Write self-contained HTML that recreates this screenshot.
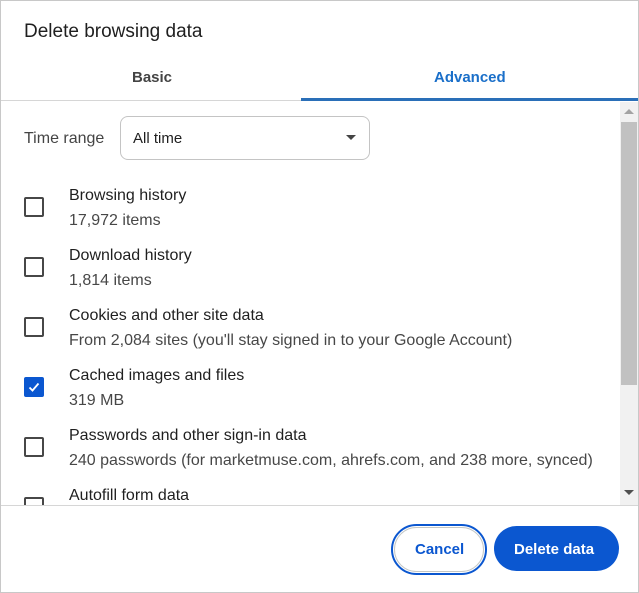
<!DOCTYPE html>
<html><head><style>
*{margin:0;padding:0;box-sizing:border-box}
body{width:639px;height:593px;background:#fff;font-family:"Liberation Sans",sans-serif;color:#1f1f1f;position:relative;overflow:hidden}
.frame{position:absolute;left:0;top:0;width:639px;height:593px;border:1px solid #c8c8c8}
.abs{position:absolute;white-space:nowrap}
.cb{position:absolute;left:24px;width:20px;height:20px;border:2px solid #474747;border-radius:2px}
.t{font-size:16px;color:#1f1f1f}
.s{font-size:16px;color:#474747}
</style></head><body>
<div class="frame"></div>
<div class="abs" style="left:24px;top:21px;font-size:19px;color:#1f1f1f">Delete browsing data</div>
<div class="abs" style="left:132px;top:69px;font-size:15px;font-weight:bold;color:#444">Basic</div>
<div class="abs" style="left:434px;top:69px;font-size:15px;font-weight:bold;color:#1a6fc9">Advanced</div>
<div class="abs" style="left:1px;top:100px;width:637px;height:1px;background:#d6d6d6"></div>
<div class="abs" style="left:301px;top:98px;width:337px;height:3px;background:#2a6fb8"></div>
<div class="abs" style="left:620px;top:102px;width:18px;height:403px;background:#f1f1f1"></div>
<div class="abs" style="left:621px;top:122px;width:16px;height:263px;background:#c1c1c1"></div>
<div class="abs" style="left:624px;top:109px;width:0;height:0;border-left:5px solid transparent;border-right:5px solid transparent;border-bottom:5px solid #a3a3a3"></div>
<div class="abs" style="left:624px;top:490px;width:0;height:0;border-left:5px solid transparent;border-right:5px solid transparent;border-top:5px solid #505050"></div>
<div class="abs" style="left:24px;top:130px;font-size:16px;color:#444">Time range</div>
<div class="abs" style="left:120px;top:116px;width:250px;height:44px;border:1px solid #c4c4c4;border-radius:8px"></div>
<div class="abs" style="left:133px;top:130px;font-size:15px;color:#1f1f1f">All time</div>
<div class="abs" style="left:346px;top:135px;width:0;height:0;border-left:5px solid transparent;border-right:5px solid transparent;border-top:5px solid #444"></div>
<div style="position:absolute;left:0;top:102px;width:620px;height:403px;overflow:hidden">
 <div class="cb" style="top:95px"></div>
 <div class="abs t" style="left:69px;top:85px">Browsing history</div>
 <div class="abs s" style="left:69px;top:110px">17,972 items</div>
 <div class="cb" style="top:155px"></div>
 <div class="abs t" style="left:69px;top:145px">Download history</div>
 <div class="abs s" style="left:69px;top:170px">1,814 items</div>
 <div class="cb" style="top:215px"></div>
 <div class="abs t" style="left:69px;top:205px">Cookies and other site data</div>
 <div class="abs s" style="left:69px;top:230px">From 2,084 sites (you'll stay signed in to your Google Account)</div>
 <div class="cb" style="top:275px;background:#0b57d0;border-color:#0b57d0"><svg width="16" height="16" viewBox="0 0 16 16" style="position:absolute;left:0;top:0"><path d="M3.5 8.5l3 3 6-7" fill="none" stroke="#fff" stroke-width="1.8"/></svg></div>
 <div class="abs t" style="left:69px;top:265px">Cached images and files</div>
 <div class="abs s" style="left:69px;top:290px">319 MB</div>
 <div class="cb" style="top:335px"></div>
 <div class="abs t" style="left:69px;top:325px">Passwords and other sign-in data</div>
 <div class="abs s" style="left:69px;top:350px">240 passwords (for marketmuse.com, ahrefs.com, and 238 more, synced)</div>
 <div class="cb" style="top:395px"></div>
 <div class="abs t" style="left:69px;top:385px">Autofill form data</div>
</div>
<div class="abs" style="left:1px;top:505px;width:637px;height:1px;background:#d6d6d6"></div>
<div class="abs" style="left:391px;top:524px;width:96px;height:51px;border:2px solid #0b57d0;border-radius:26px"></div>
<div class="abs" style="left:394px;top:527px;width:90px;height:45px;border:1px solid #c4c7c5;border-radius:23px"></div>
<div class="abs" style="left:415px;top:541px;font-size:15px;font-weight:bold;color:#0b57d0">Cancel</div>
<div class="abs" style="left:494px;top:526px;width:125px;height:45px;background:#0b57d0;border-radius:23px"></div>
<div class="abs" style="left:514px;top:541px;font-size:15px;font-weight:bold;color:#fff">Delete data</div>
</body></html>
